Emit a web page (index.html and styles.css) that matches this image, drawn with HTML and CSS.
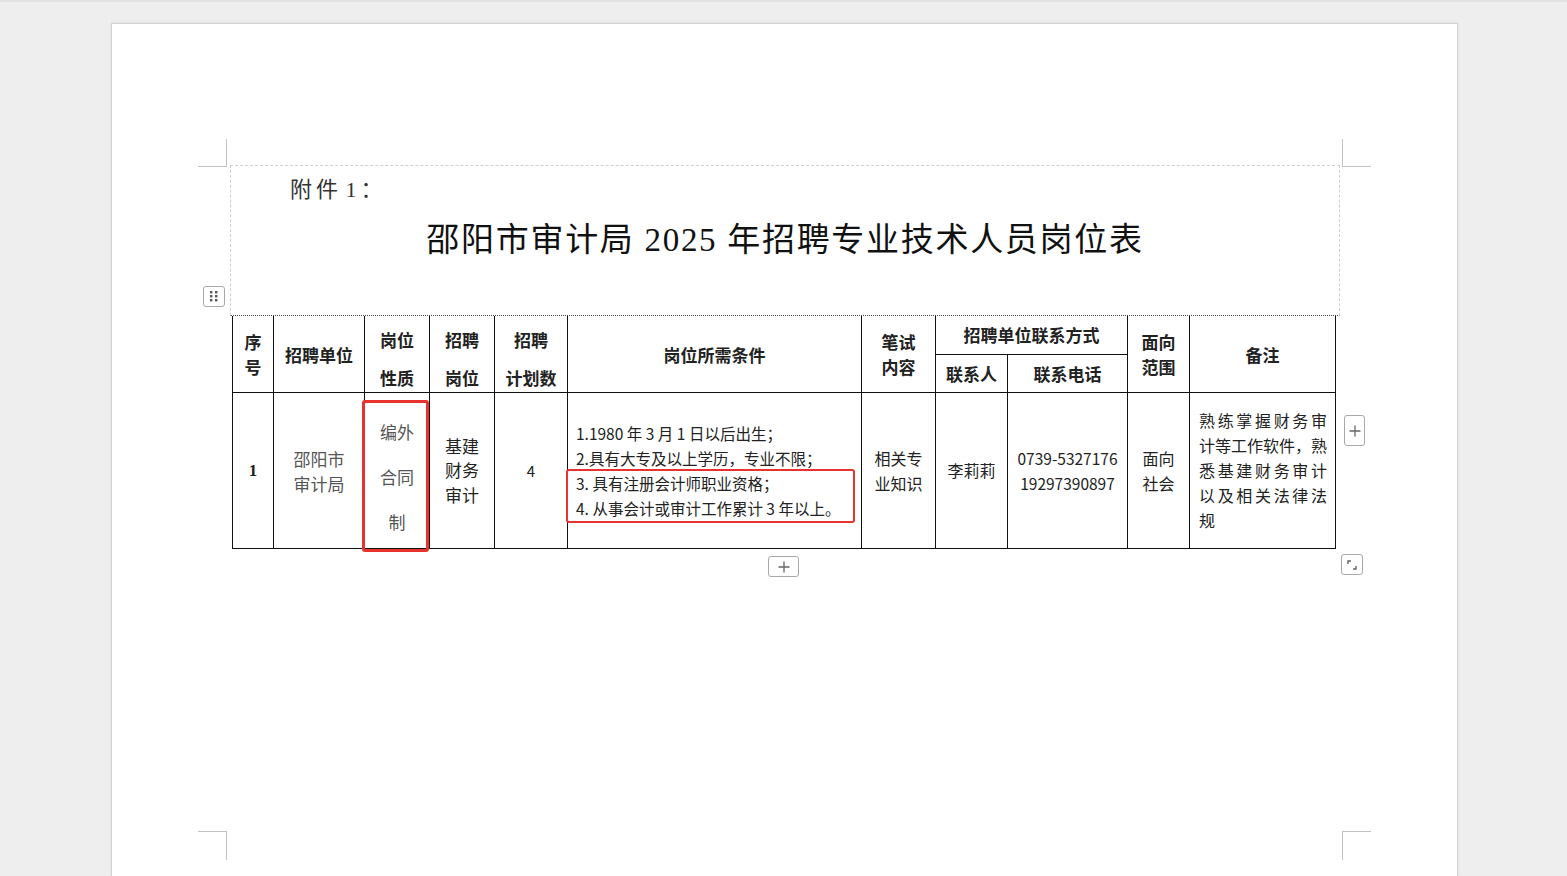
FILE: index.html
```html
<!DOCTYPE html>
<html lang="zh-CN">
<head>
<meta charset="utf-8">
<title>邵阳市审计局 2025 年招聘专业技术人员岗位表</title>
<link rel="stylesheet" href="styles.css">
</head>
<body>
<div class="page">
  <div class="mark mark-tl"></div>
  <div class="mark mark-tr"></div>
  <div class="mark mark-bl"></div>
  <div class="mark mark-br"></div>

  <div class="sheet">
    <div class="head-box">
      <div class="annex">附件 1：</div>
      <h1 class="title">邵阳市审计局 2025 年招聘专业技术人员岗位表</h1>
    </div>

    <table class="posts">
      <colgroup>
        <col style="width:41px"><col style="width:91px"><col style="width:65px"><col style="width:65px"><col style="width:73px"><col style="width:294px"><col style="width:74px"><col style="width:72px"><col style="width:120px"><col style="width:62px"><col style="width:146px">
      </colgroup>
      <thead>
        <tr class="h1">
          <th rowspan="2">序<br>号</th>
          <th rowspan="2">招聘单位</th>
          <th rowspan="2"><div class="tall">岗位<br>性质</div></th>
          <th rowspan="2"><div class="tall">招聘<br>岗位</div></th>
          <th rowspan="2"><div class="tall">招聘<br>计划数</div></th>
          <th rowspan="2">岗位所需条件</th>
          <th rowspan="2">笔试<br>内容</th>
          <th colspan="2">招聘单位联系方式</th>
          <th rowspan="2">面向<br>范围</th>
          <th rowspan="2">备注</th>
        </tr>
        <tr class="h2">
          <th>联系人</th>
          <th>联系电话</th>
        </tr>
      </thead>
      <tbody>
        <tr class="data">
          <td class="num">1</td>
          <td class="gray">邵阳市<br>审计局</td>
          <td class="gray"><div class="spaced">编外<br>合同<br>制</div></td>
          <td class="lh24">基建<br>财务<br>审计</td>
          <td class="small">4</td>
          <td class="req">1.1980 年 3 月 1 日以后出生；<br>2.具有大专及以上学历，专业不限；<br>3. 具有注册会计师职业资格；<br>4. 从事会计或审计工作累计 3 年以上。</td>
          <td>相关专<br>业知识</td>
          <td>李莉莉</td>
          <td class="phone">0739-5327176<br>19297390897</td>
          <td>面向<br>社会</td>
          <td class="note">
            <span class="jl">熟练掌握财务审</span>
            <span class="jl">计等工作软件，熟</span>
            <span class="jl">悉基建财务审计</span>
            <span class="jl">以及相关法律法</span>
            <span class="last">规</span>
          </td>
        </tr>
      </tbody>
    </table>

    <div class="hl hl-1"></div>
    <div class="hl hl-2"></div>

    <div class="tool handle">
      <svg width="8" height="11" viewBox="0 0 8 11"><g fill="#555"><rect x="0" y="0" width="2.4" height="2.4"/><rect x="5" y="0" width="2.4" height="2.4"/><rect x="0" y="4" width="2.4" height="2.4"/><rect x="5" y="4" width="2.4" height="2.4"/><rect x="0" y="8" width="2.4" height="2.4"/><rect x="5" y="8" width="2.4" height="2.4"/></g></svg>
    </div>
    <div class="tool add-row">
      <svg width="12" height="12" viewBox="0 0 12 12"><path d="M6 0.5V11.5M0.5 6H11.5" stroke="#666" stroke-width="1.3"/></svg>
    </div>
    <div class="tool add-col">
      <svg width="12" height="12" viewBox="0 0 12 12"><path d="M6 0.5V11.5M0.5 6H11.5" stroke="#666" stroke-width="1.3"/></svg>
    </div>
    <div class="tool resize">
      <svg width="10" height="10" viewBox="0 0 10 10"><path d="M1 4V1H4M9 6V9H6" fill="none" stroke="#666" stroke-width="1.4"/></svg>
    </div>
  </div>
</div>
</body>
</html>
```
FILE: styles.css
```css
html, body {
  margin: 0;
  padding: 0;
}
body {
  background: #eeeeee;
  height: 876px;
  overflow: hidden;
  font-family: "Noto Sans CJK SC", sans-serif;
  color: #111;
  border-top: 2px solid #e2e2e2;
  box-sizing: border-box;
}
.page {
  position: relative;
  box-sizing: border-box;
  margin: 21px 0 0 111px;
  width: 1347px;
  height: 853px;
  background: #fff;
  border: 1px solid #d2d2d2;
  border-bottom: 0;
  box-shadow: 0 0 3px rgba(0,0,0,0.08);
  padding: 141px 0 0 118px;
}
.mark {
  position: absolute;
  box-sizing: border-box;
  width: 29px;
  height: 28px;
  border: 0 solid #c2c2c2;
}
.mark-tl { left: 86px; top: 115px; border-right-width: 1px; border-bottom-width: 1px; }
.mark-tr { left: 1230px; top: 115px; border-left-width: 1px; border-bottom-width: 1px; }
.mark-bl { left: 86px; top: 807px; border-right-width: 1px; border-top-width: 1px; height: 29px; }
.mark-br { left: 1230px; top: 807px; border-left-width: 1px; border-top-width: 1px; height: 29px; }

.sheet {
  position: relative;
  width: 1110px;
}
.head-box {
  box-sizing: border-box;
  height: 151px;
  border: 1px dashed #cfcfcf;
  border-bottom: 1px dotted #444;
  padding-top: 9px;
}
.annex {
  margin-left: 59px;
  font-family: "Liberation Serif", "Noto Sans CJK SC", serif;
  font-size: 22px;
  line-height: 30px;
  letter-spacing: 4px;
  word-spacing: -6px;
  color: #333;
}
.title {
  margin: 13px 0 0;
  text-align: center;
  font-family: "Liberation Serif", "Noto Sans CJK SC", serif;
  font-size: 33px;
  font-weight: 400;
  line-height: 44px;
  letter-spacing: 1.7px;
  color: #111;
}

.posts {
  margin-left: 2px;
  width: 1103px;
  table-layout: fixed;
  border-collapse: collapse;
  border-top: 0;
}
.posts th, .posts td {
  border: 1px solid #111;
  padding: 0;
  text-align: center;
  vertical-align: middle;
}
.posts thead tr.h1 th { border-top: 0; }
.posts th {
  font-size: 17px;
  font-weight: 700;
  line-height: 25px;
  color: #222;
}
.posts tr.h1 { height: 38px; }
.posts tr.h2 { height: 38px; }
.posts th .tall {
  line-height: 38px;
  margin-top: 5px;
  margin-bottom: -5px;
}

.posts tr.data { height: 156px; }
.posts td {
  font-size: 16px;
  line-height: 25px;
  color: #222;
}
.posts td.num {
  font-family: "Liberation Serif", serif;
  font-weight: 700;
  font-size: 17px;
}
.posts td.gray { color: #555; font-size: 17px; }
.posts td .spaced {
  line-height: 45px;
  margin-top: 6px;
  margin-bottom: -6px;
}
.posts td.lh24 { line-height: 24.5px; font-size: 17px; }
.posts td.small { font-size: 15px; }
.posts td.req {
  text-align: left;
  padding-left: 8px;
  font-size: 15.5px;
  white-space: nowrap;
}
.posts td.phone { font-size: 15.5px; }
.posts td.note {
  text-align: left;
  padding: 0 8px 0 9px;
}
.note .jl {
  display: block;
  text-align: justify;
  text-align-last: justify;
}
.note .last { display: block; }

.hl {
  position: absolute;
  box-sizing: border-box;
  border: 3px solid #e8322e;
  border-radius: 3px;
}
.hl-1 { left: 132px; top: 235px; width: 67px; height: 152px; }
.hl-2 { left: 336px; top: 304px; width: 289px; height: 54px; border-width: 2.5px; }

.tool {
  position: absolute;
  box-sizing: border-box;
  border: 1px solid #a9a9a9;
  border-radius: 3px;
  background: #fff;
  display: flex;
  align-items: center;
  justify-content: center;
}
.handle { left: -27px; top: 121px; width: 22px; height: 21px; }
.add-row { left: 538px; top: 391px; width: 31px; height: 21px; }
.add-col { left: 1114px; top: 250px; width: 21px; height: 31px; }
.resize { left: 1111px; top: 389px; width: 22px; height: 21px; }
```
